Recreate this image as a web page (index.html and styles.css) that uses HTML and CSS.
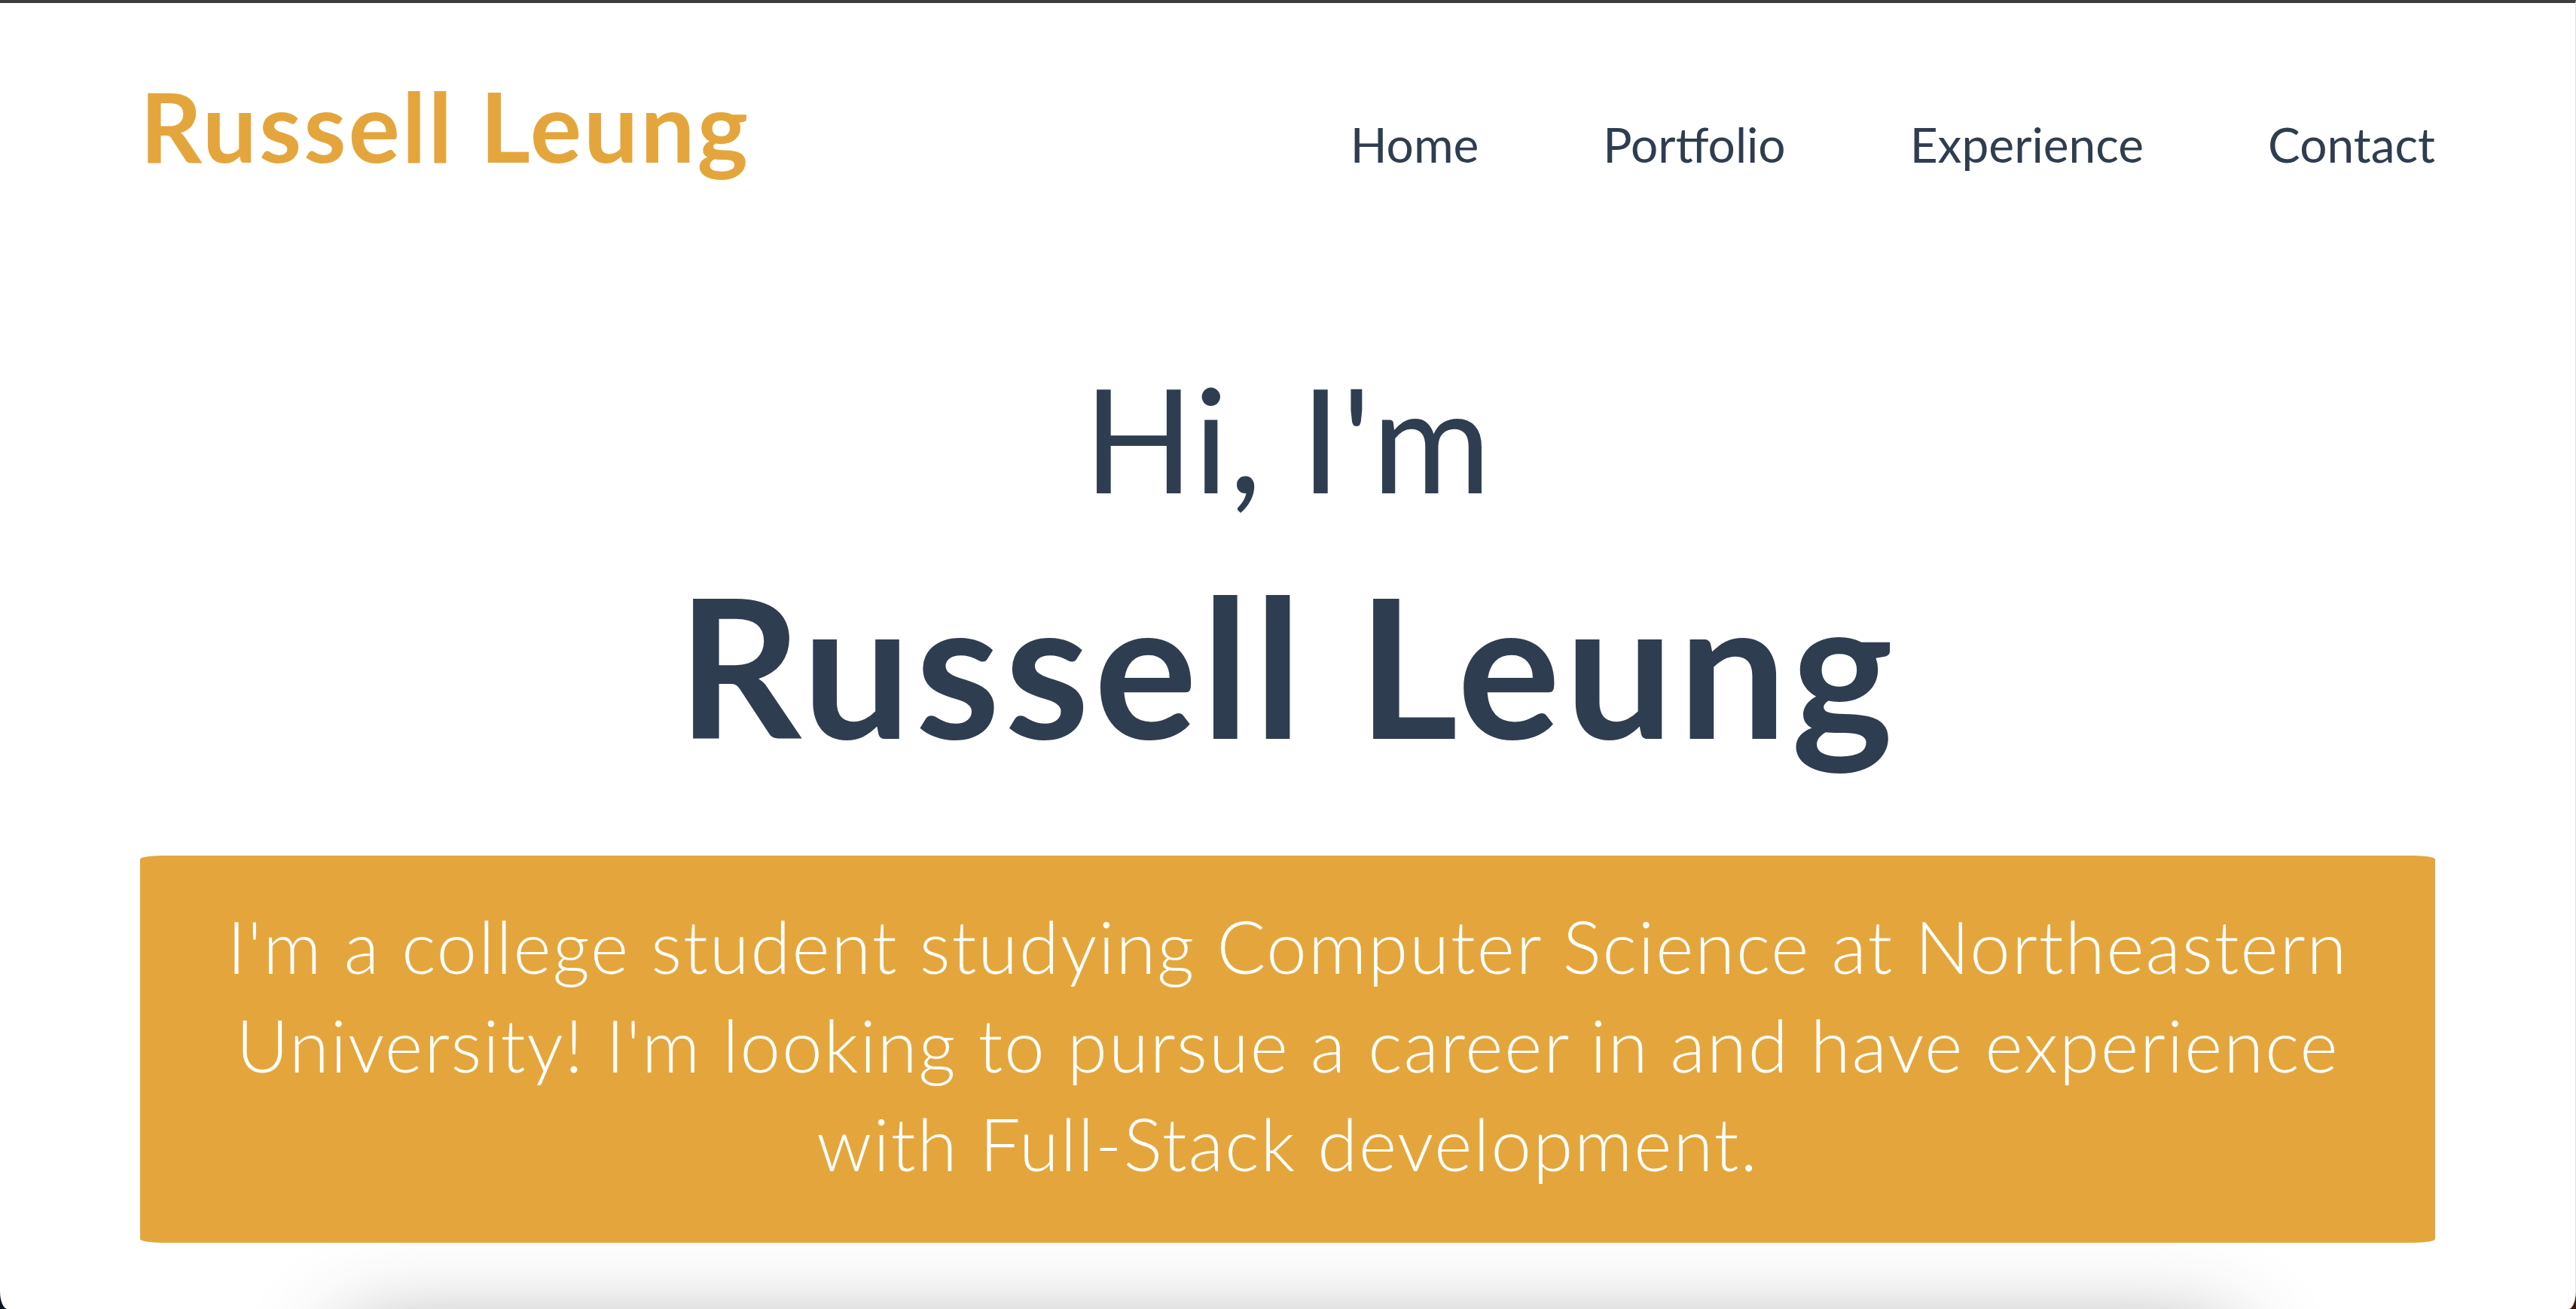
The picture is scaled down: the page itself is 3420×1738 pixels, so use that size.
FILE: index.html
```html
<!DOCTYPE html>
<html lang="en">
<head>
<meta charset="utf-8">
<title>Russell Leung</title>
<link rel="stylesheet" href="styles.css">
</head>
<body>
<div class="window">
  <header class="site-header">
    <a class="logo" href="#">Russell Leung</a>
    <nav class="nav">
      <a href="#">Home</a>
      <a href="#">Portfolio</a>
      <a href="#">Experience</a>
      <a href="#">Contact</a>
    </nav>
  </header>
  <main class="hero">
    <h2 class="hero-greeting">Hi, I'm</h2>
    <h1 class="hero-name">Russell Leung</h1>
    <div class="about-card">
      <p>I'm a college student studying Computer Science at Northeastern University! I'm looking to pursue a career in and have experience with Full-Stack development.</p>
    </div>
  </main>
  <section class="next-section"></section>
</div>
</body>
</html>
```
FILE: styles.css
```css
* { box-sizing: border-box; }
html, body { margin: 0; padding: 0; }
body {
  background: linear-gradient(90deg, #0b1620 0%, #1c1a1f 50%, #3a1a10 100%);
  font-family: Lato, "Open Sans", sans-serif;
  height: 1738px;
  overflow: hidden;
}
.window {
  height: 1738px;
  background: #ffffff;
  border-top: 4px solid #3d3d3d;
  border-right: 1px solid #e2e2e2;
  border-radius: 0 0 10px 10px / 0 0 24px 24px;
  overflow: hidden;
}
.site-header {
  display: flex;
  justify-content: space-between;
  align-items: baseline;
  padding: 99px 186px 0 186px;
}
.logo {
  font-size: 128px;
  line-height: 1;
  font-weight: 700;
  letter-spacing: 3px;
  color: #e4a63c;
  text-decoration: none;
}
.nav {
  display: flex;
  gap: 165px;
}
.nav a {
  font-size: 64px;
  font-weight: 400;
  color: #2f3d50;
  text-decoration: none;
}
.hero {
  display: flex;
  flex-direction: column;
  align-items: center;
  padding: 0 186px;
  color: #2f3d50;
}
.hero-greeting {
  margin: 254px 0 0;
  font-size: 192px;
  line-height: 1;
  font-weight: 400;
  letter-spacing: 1px;
}
.hero-name {
  margin: 77px 0 0;
  font-size: 256px;
  line-height: 1;
  font-weight: 700;
  letter-spacing: 6px;
}
.about-card {
  margin-top: 126px;
  width: 100%;
  background: #e4a63c;
  border-radius: 28px / 5px;
  padding: 54px 64px 67px;
  color: #ffffff;
  text-align: center;
}
.about-card p {
  margin: 0;
  font-size: 96px;
  line-height: 131px;
  font-weight: 300;
  letter-spacing: 2px;
}
.next-section {
  width: 2500px;
  height: 800px;
  margin: 130px auto 0;
  background: #ffffff;
  box-shadow: 0 0 120px rgba(0, 0, 0, 0.45);
}
```
